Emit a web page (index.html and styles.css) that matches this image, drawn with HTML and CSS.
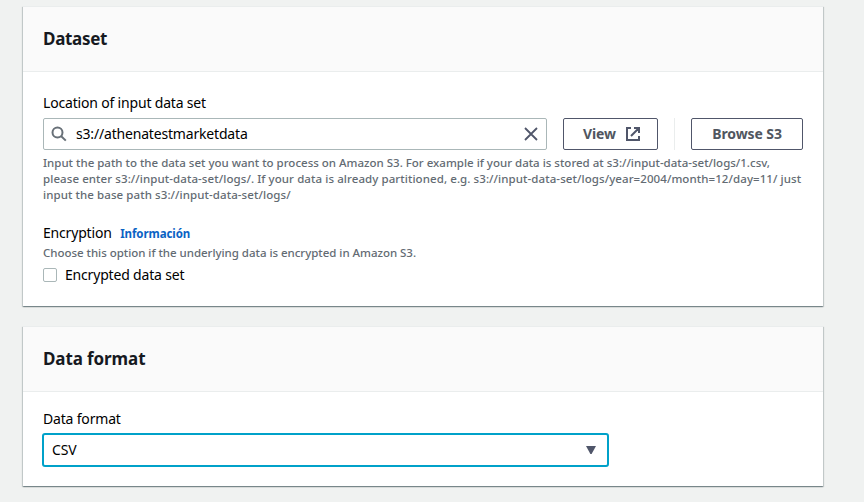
FILE: index.html
```
<!DOCTYPE html>
<html lang="en">
<head>
<meta charset="utf-8">
<title>Dataset</title>
<link rel="stylesheet" href="styles.css">
</head>
<body>
<main class="page">
  <section class="card dataset">
    <header class="card-header"><h2 class="short">Dataset</h2></header>
    <div class="card-body">
      <div class="label">Location of input data set</div>
      <div class="location-row">
        <div class="search">
          <svg class="search-icon" width="16" height="16" viewBox="0 0 16 16"><circle cx="6.5" cy="6.5" r="5" /><path d="M10 10l4.8 4.6" /></svg>
          <span class="value">s3://athenatestmarketdata</span>
          <svg class="clear-icon" width="14" height="14" viewBox="0 0 14 14"><path d="M1 1l12 12M13 1L1 13" /></svg>
        </div>
        <div class="button view">View
          <svg class="external-icon" width="14" height="14" viewBox="0 0 14 14"><path d="M5 1H1v12h12V9M8 1h5v5M13 1L5 9" /></svg>
        </div>
        <div class="divider"></div>
        <div class="button browse">Browse S3</div>
      </div>
      <p class="hint"><span>Input the path to the data set you want to process on Amazon S3. For example if your data is stored at s3://input-data-set/logs/1.csv,</span><br><span class="wide">please enter s3://input-data-set/logs/. If your data is already partitioned, e.g. s3://input-data-set/logs/year=2004/month=12/day=11/ just</span><br><span class="wide">input the base path s3://input-data-set/logs/</span></p>
      <div class="label encryption">Encryption <a class="info">Información</a></div>
      <p class="hint choose">Choose this option if the underlying data is encrypted in Amazon S3.</p>
      <div class="check-row"><span class="checkbox"></span><span>Encrypted data set</span></div>
    </div>
  </section>
  <section class="card format">
    <header class="card-header"><h2>Data format</h2></header>
    <div class="card-body">
      <div class="label">Data format</div>
      <div class="select"><span>CSV</span><svg width="10" height="8" viewBox="0 0 10 8"><path d="M0 0h10L5.6 8H4.4z" /></svg></div>
    </div>
  </section>
</main>
</body>
</html>
```
FILE: styles.css
```
* { box-sizing: border-box; }
body {
  margin: 0;
  height: 502px;
  overflow: hidden;
  background: #f0f2f1;
  color: #000;
  font: 14px/20px "Noto Sans", "Open Sans", sans-serif;
  letter-spacing: -0.18px;
  white-space: nowrap;
}
.page {
  display: flex;
  flex-direction: column;
  gap: 20px;
  width: 800px;
  margin: 6px 0 0 23px;
}
.card {
  background: #fff;
  border-top: 1px solid #eaeded;
  box-shadow: 0 1px 1px 0 rgba(0, 28, 36, .3), 1px 1px 1px 0 rgba(0, 28, 36, .15), -1px 1px 1px 0 rgba(0, 28, 36, .15);
}
.dataset { height: 300px; }
.format { height: 160px; }
.card-header {
  height: 65px;
  padding: 21px 20px 0;
  background: #fafafa;
  border-bottom: 1px solid #eaeded;
}
h2 {
  margin: 0;
  color: #16191f;
  font-size: 17px;
  line-height: 22px;
  letter-spacing: -0.1px;
}
.short { letter-spacing: -0.3px; }
.card-body { padding: 21px 20px 0; }
.format .card-body { padding: 17px 20px 0; }
.location-row { display: flex; margin-top: 5px; }
.search {
  display: flex;
  align-items: center;
  width: 504px;
  height: 32px;
  padding: 0 8px 0 7px;
  border: 1px solid #aab7b8;
  border-radius: 2px;
}
.search-icon {
  margin-right: 9px;
  fill: none;
  stroke: #687078;
  stroke-width: 2;
}
.clear-icon {
  margin-left: auto;
  fill: none;
  stroke: #50566a;
  stroke-width: 1.8;
}
.button {
  display: flex;
  align-items: center;
  justify-content: center;
  height: 32px;
  border: 1px solid #50566a;
  border-radius: 2px;
  color: #50565f;
  font-weight: 700;
  letter-spacing: -0.1px;
}
.view { width: 95px; gap: 10px; margin-left: 16px; padding-left: 2px; }
.browse { width: 112px; margin-left: 16px; }
.divider { width: 1px; margin-left: 16px; background: #eaeded; }
.external-icon { fill: none; stroke: #50566a; stroke-width: 2; }
.hint {
  margin: 5px 0 0;
  color: #636b73;
  font-size: 11.5px;
  font-weight: 500;
  line-height: 16px;
  letter-spacing: 0;
}
.wide { letter-spacing: 0.08px; }
.encryption { margin-top: 20px; }
.info {
  margin-left: 5px;
  color: #0a62c4;
  font-size: 11.5px;
  font-weight: 700;
  letter-spacing: -0.07px;
}
.choose { margin-top: 1px; letter-spacing: -0.03px; }
.check-row { display: flex; align-items: center; gap: 8px; margin-top: 4px; }
.checkbox { width: 14px; height: 14px; border: 1px solid #aab7b8; border-radius: 2px; }
.select {
  display: flex;
  align-items: center;
  justify-content: space-between;
  width: 567px;
  height: 34px;
  margin: 4px 0 0 -1px;
  padding: 0 11px 0 8px;
  border: 2px solid #00a1c9;
  border-radius: 3px;
}
.select svg { fill: #50566a; }
```
